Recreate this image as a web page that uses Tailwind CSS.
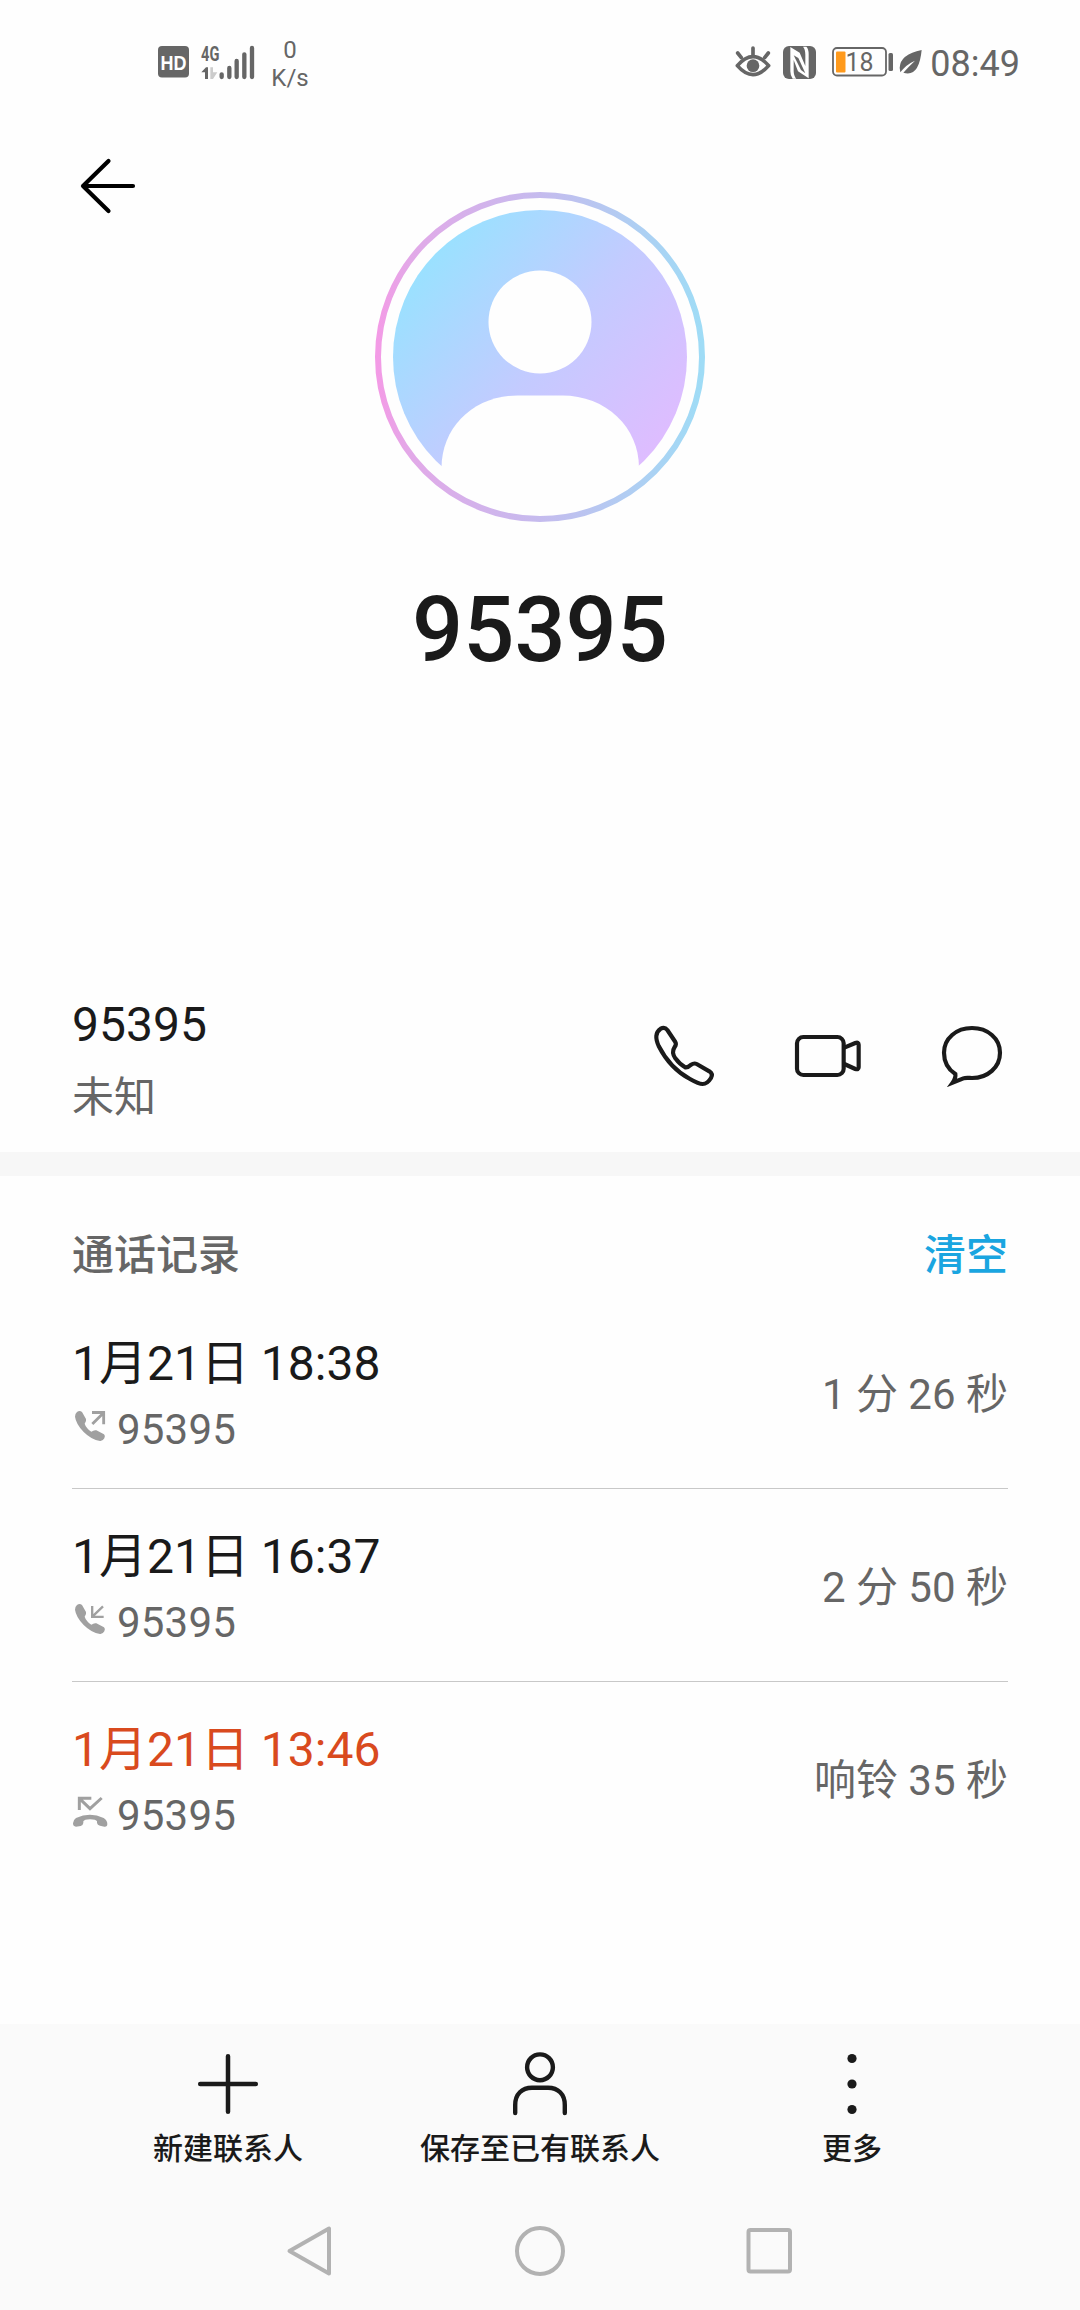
<!DOCTYPE html>
<html lang="zh-CN">

<head>
    <meta charset="UTF-8">
    <meta name="viewport" content="width=device-width, initial-scale=1.0">
    <title>95395</title>
    <script src="https://cdn.jsdelivr.net/npm/@tailwindcss/browser@4"></script>
</head>

<body class="bg-[#fefefe] text-[#1a1a1a] font-[Roboto,'Noto_Sans_CJK_SC',sans-serif]">
    <div class="w-[1080px] h-[2310px] flex flex-col overflow-hidden">

        <!-- Status bar -->
        <div class="h-[124px] shrink-0 flex items-center justify-between pl-[158px] pr-[60px] text-[#666]">
            <div class="flex items-center">
                <svg width="31" height="32" viewBox="0 0 31 32">
                    <rect width="31" height="31.5" rx="4" fill="#666" />
                    <text x="15.5" y="23.500" text-anchor="middle" textLength="26" lengthAdjust="spacingAndGlyphs"
                        class="font-['Liberation_Sans'] font-bold text-[21px]" fill="#fff">HD</text>
                </svg>
                <svg class="ml-3 overflow-visible" width="54" height="34" viewBox="0 0 162 102" fill="#666">
                    <text x="0" y="48" textLength="55" lengthAdjust="spacingAndGlyphs"
                        class="font-['Roboto'] font-bold text-[62px]">4G</text>
                    <path d="M1 82L15 67H21V102H12V82Z" />
                    <path d="M28 67H36V82H49L36 102H28Z" fill="#ccc" />
                    <g stroke="#666" stroke-width="13" stroke-linecap="round">
                        <path d="M62 88V96M85 69V96M107 48V96M130 28V96M153 9V96" />
                    </g>
                </svg>
                <div class="mt-[3px] ml-[17px] w-[36px] flex flex-col items-center text-[24px] leading-[28px] whitespace-nowrap">
                    <span>0</span>
                    <span>K/s</span>
                </div>
            </div>
            <div class="flex items-center">
                <svg width="36" height="32" viewBox="0 0 108 96" fill="none" stroke="#666" stroke-width="11">
                    <path d="M7 59Q54 5 101 59Q54 113 7 59Z" stroke-linejoin="round" />
                    <circle cx="54" cy="59" r="19" fill="#666" stroke="none" />
                    <path d="M54 6V26M8 21L19 35M100 21L89 35" stroke-linecap="round" />
                </svg>
                <svg class="ml-3" width="33" height="33" viewBox="0 0 99 99">
                    <rect width="99" height="99" rx="18" fill="#666" />
                    <path d="M22 3L50 20L67 60V26Q67 10 60 2H70Q77 9 77 24V97L45 76L32 42V74Q32 90 40 98H29Q22 90 22 76Z"
                        fill="#fff" />
                    <path d="M32 28L46 36L67 82L54 72Z" fill="#666" />
                </svg>
                <svg class="ml-4 overflow-visible" width="61" height="30" viewBox="0 0 61 30">
                    <rect x="1" y="1" width="53" height="27.500" rx="4" fill="none" stroke="#666" stroke-width="1.8" />
                    <rect x="4" y="4.500" width="9.500" height="21" rx="1" fill="#ff9a1c" />
                    <rect x="56.5" y="6" width="4.500" height="18" rx="1.500" fill="#666" />
                    <text x="13.500" y="24" textLength="28" lengthAdjust="spacingAndGlyphs"
                        class="font-['Roboto'] text-[26px]" fill="#666">18</text>
                </svg>
                <svg class="ml-1.5" width="24" height="26" viewBox="0 0 72 78">
                    <path d="M68 3Q4 16 2 56L4 70Q22 46 48 35Q30 52 13 71Q60 86 68 3Z" fill="#666" />
                </svg>
                <span class="mt-[3px] ml-[7px] text-[36px] leading-[48px]">08:49</span>
            </div>
        </div>

        <!-- Back button and avatar -->
        <div class="shrink-0 flex items-start justify-between px-[78px] pt-8">
            <button class="w-[60px] h-[60px]">
                <svg width="60" height="60" viewBox="0 0 60 60" fill="none" stroke="#000" stroke-width="4.2"
                    stroke-linecap="round" stroke-linejoin="round">
                    <path d="M30.500 5L5 30L30.500 55M5 30H55" />
                </svg>
            </button>
            <svg class="mt-9" width="330" height="330" viewBox="0 0 330 330">
                <defs>
                    <linearGradient id="ring">
                        <stop offset="0" stop-color="#f39be6" />
                        <stop offset=".1" stop-color="#e2a9e8" />
                        <stop offset=".5" stop-color="#c5bbee" />
                        <stop offset="1" stop-color="#9fdcf6" />
                    </linearGradient>
                    <linearGradient id="disc" x1=".12" y1=".17" x2=".9" y2=".83">
                        <stop offset="0" stop-color="#9ae1ff" />
                        <stop offset=".5" stop-color="#c3cbff" />
                        <stop offset="1" stop-color="#dfbcff" />
                    </linearGradient>
                    <clipPath id="disc-clip">
                        <circle cx="165" cy="165" r="148" />
                    </clipPath>
                </defs>
                <circle cx="165" cy="165" r="162" fill="none" stroke="url(#ring)" stroke-width="6" />
                <circle cx="165" cy="165" r="147" fill="url(#disc)" />
                <circle cx="165" cy="130" r="51.500" fill="#fefefe" />
                <path d="M66.500 276C66.500 235 99 203.500 143 203.500H187C231 203.500 264 235 264 276V330H66.500Z"
                    fill="#fefefe" clip-path="url(#disc-clip)" />
            </svg>
            <div class="w-[60px]"></div>
        </div>

        <h1 class="mt-[59px] h-[100px] shrink-0 text-center text-[90px] leading-[100px] font-medium">95395</h1>

        <!-- Phone number -->
        <div class="mt-[279px] h-48 shrink-0 flex items-center justify-between px-[72px]">
            <div class="flex flex-col gap-[18px] pt-0.5">
                <span class="text-[48px] leading-[64px]">95395</span>
                <span class="text-[42px] leading-[46px] text-[#666]">未知</span>
            </div>
            <div class="flex items-center gap-[72px]">
                <svg width="72" height="72" viewBox="84 90 216 216" fill="none" stroke="#1a1a1a" stroke-width="12.500"
                    stroke-linejoin="round">
                    <path d="M122 116Q134 110 142 120L166 156Q170 163 164 171Q158 180 159 188Q160 196 166 205Q180 224 196 232Q204 233 212 225Q222 218 230 222L268 244Q280 252 273 264Q262 282 248 282Q236 282 210 267Q150 235 116 168Q108 150 109 138Q110 124 122 116Z" />
                </svg>
                <svg width="72" height="72" viewBox="516 90 216 216" fill="none" stroke="#1a1a1a" stroke-width="12.500"
                    stroke-linejoin="round">
                    <rect x="531" y="141" width="140" height="114" rx="19" />
                    <path d="M673 173L706 159Q716 155 716 164V232Q716 240 706 237L673 222" />
                </svg>
                <svg width="72" height="72" viewBox="948 90 216 216" fill="none" stroke="#1a1a1a" stroke-width="12.500">
                    <path d="M1006 252C985 238 972 215 972 188C972 145 1009 114 1056 114C1103 114 1140 145 1140 188C1140 232 1103 264 1056 264C1048 264 1038 262 1030 265L998 278Q1008 264 1006 252Z" />
                </svg>
            </div>
        </div>

        <div class="h-6 shrink-0 bg-[#f7f7f7]"></div>

        <!-- Call log -->
        <div class="flex flex-col px-[72px]">
            <div class="h-[120px] pt-10 flex items-center justify-between text-[42px] leading-[50px] font-medium">
                <h2 class="text-[#666]">通话记录</h2>
                <button class="text-[#1aa5e0]">清空</button>
            </div>

            <div class="h-[193px] pt-[5px] flex items-center justify-between border-b border-[#c8c8c8]">
                <div class="flex flex-col gap-[11px]">
                    <span class="text-[48px] leading-[60px]">1月21日 18:38</span>
                    <div class="flex items-center gap-[9px] text-[42px] leading-[50px] text-[#666]">
                        <svg class="-mt-2" width="36" height="36" viewBox="0 0 108 108" fill="#a0a0a0">
                            <path d="M15 12Q23 6 30 12L42 33Q44 40 38 47Q42 60 58 71Q66 65 73 67L96 79Q101 84 97 91Q92 100 84 99Q58 95 35 72Q12 48 9 26Q9 17 15 12Z" />
                            <path d="M60 13.500H95V49M95 14L61 48" fill="none" stroke="#a0a0a0" stroke-width="8.500" />
                        </svg>
                        <span class="tracking-[0.2px]">95395</span>
                    </div>
                </div>
                <span class="text-[42px] leading-[50px] text-[#666]">1 分 26 秒</span>
            </div>

            <div class="h-[193px] pt-[5px] flex items-center justify-between border-b border-[#c8c8c8]">
                <div class="flex flex-col gap-[11px]">
                    <span class="text-[48px] leading-[60px]">1月21日 16:37</span>
                    <div class="flex items-center gap-[9px] text-[42px] leading-[50px] text-[#666]">
                        <svg class="-mt-2" width="36" height="36" viewBox="0 0 108 108" fill="#a0a0a0">
                            <path d="M15 12Q23 6 30 12L42 33Q44 40 38 47Q42 60 58 71Q66 65 73 67L96 79Q101 84 97 91Q92 100 84 99Q58 95 35 72Q12 48 9 26Q9 17 15 12Z" />
                            <path d="M60.500 15V47.500H95M93 16L61 47" fill="none" stroke="#a0a0a0" stroke-width="7" />
                        </svg>
                        <span class="tracking-[0.2px]">95395</span>
                    </div>
                </div>
                <span class="text-[42px] leading-[50px] text-[#666]">2 分 50 秒</span>
            </div>

            <div class="h-[193px] pt-1 flex items-center justify-between">
                <div class="flex flex-col gap-[11px]">
                    <span class="text-[48px] leading-[60px] text-[#d94a1e]">1月21日 13:46</span>
                    <div class="flex items-center gap-[9px] text-[42px] leading-[50px] text-[#666]">
                        <svg class="-mt-2" width="36" height="36" viewBox="0 0 108 108" fill="#a0a0a0">
                            <path d="M3 88Q3 78 12 72Q54 52 95 72Q106 79 106 90Q106 99 97 98L84 95Q76 94 75 87V82Q72 76 54 76Q37 76 34 82V87Q33 94 26 96L12 98Q3 98 3 88Z" />
                            <path d="M22 48V13H58M22 13L54 44L89 12" fill="none" stroke="#a0a0a0" stroke-width="9" />
                        </svg>
                        <span class="tracking-[0.2px]">95395</span>
                    </div>
                </div>
                <span class="text-[42px] leading-[50px] text-[#666]">响铃 35 秒</span>
            </div>
        </div>

        <!-- Bottom toolbar and system navigation -->
        <div class="mt-auto h-[286px] shrink-0 flex flex-col bg-[#fafafa]">
            <div class="grid grid-cols-3 px-[72px] pt-[27px] text-[30px] leading-[40px] font-medium">
                <div class="flex flex-col items-center gap-3">
                    <svg width="66" height="66" viewBox="0 0 66 66" stroke="#1a1a1a" stroke-width="4.500"
                        stroke-linecap="round">
                        <path d="M33 5.200V60.800M5.200 33H60.800" />
                    </svg>
                    <span>新建联系人</span>
                </div>
                <div class="flex flex-col items-center gap-3">
                    <svg width="66" height="66" viewBox="0 0 66 66" fill="none" stroke="#1a1a1a" stroke-width="4.400"
                        stroke-linecap="round">
                        <circle cx="33" cy="16.300" r="12.900" />
                        <path d="M8.200 62V54C8.200 43 15 36.800 25 36.800H41C51 36.800 57.800 43 57.800 54V62" />
                    </svg>
                    <span>保存至已有联系人</span>
                </div>
                <div class="flex flex-col items-center gap-3">
                    <svg width="66" height="66" viewBox="0 0 66 66" fill="#1a1a1a">
                        <circle cx="33" cy="7.500" r="4.600" />
                        <circle cx="33" cy="33" r="4.600" />
                        <circle cx="33" cy="58.500" r="4.600" />
                    </svg>
                    <span>更多</span>
                </div>
            </div>
            <div class="mt-[55px] grid grid-cols-3 justify-items-center px-[194px]">
                <svg width="54" height="54" viewBox="0 0 54 54" fill="none" stroke="#b2b2b2" stroke-width="4"
                    stroke-linejoin="round">
                    <path d="M7.500 27L47 4.500V49.500Z" />
                </svg>
                <svg width="54" height="54" viewBox="0 0 54 54" fill="none" stroke="#b2b2b2" stroke-width="4">
                    <circle cx="27" cy="27" r="23" />
                </svg>
                <svg width="54" height="54" viewBox="0 0 54 54" fill="none" stroke="#b2b2b2" stroke-width="4">
                    <rect x="4.500" y="6" width="41.500" height="41.500" rx="2" />
                </svg>
            </div>
        </div>
    </div>
</body>

</html>
